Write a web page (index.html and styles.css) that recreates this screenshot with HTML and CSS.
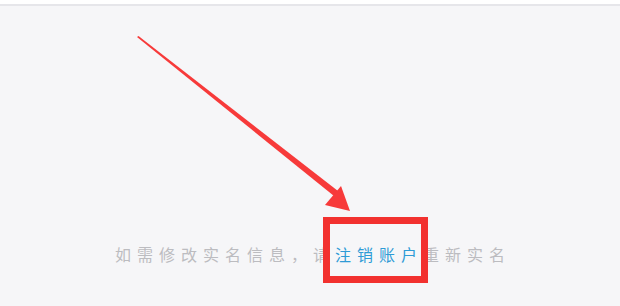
FILE: index.html
```html
<!DOCTYPE html>
<html lang="zh-CN">
<head>
<meta charset="utf-8">
<link rel="stylesheet" href="styles.css">
</head>
<body>
<div class="page">
  <div class="topline"></div>
  <main class="content">
    <p class="tip">如需修改实名信息，请<span class="link">注销账户</span>重新实名</p>
  </main>
  <svg class="annot" width="620" height="306" viewBox="0 0 620 306">
    <polygon points="137,37 138.5,36 338,191 334,196" fill="#f73a3a"/>
    <polygon points="341,186 350,211 325,205" fill="#f73a3a"/>
    <rect x="326.5" y="220.5" width="98" height="59" fill="none" stroke="#f2312f" stroke-width="7"/>
  </svg>
</div>
</body>
</html>
```
FILE: styles.css
```css
html, body {
  margin: 0;
  padding: 0;
  background: #f6f6f8;
}
.page {
  position: relative;
  width: 620px;
  height: 306px;
  overflow: hidden;
  background: #f6f6f8;
}
.topline {
  height: 4px;
  background: #ffffff;
  border-bottom: 2px solid #e6e6ea;
}
.content {
  display: flex;
  justify-content: center;
  padding-top: 236px;
}
.tip {
  margin: 0;
  padding-left: 6px;
  font-family: "Noto Sans CJK SC", sans-serif;
  font-weight: 400;
  font-size: 16px;
  line-height: 24px;
  letter-spacing: 6px;
  color: #bcbcc0;
  white-space: nowrap;
}
.link {
  color: #2f9bd6;
}
.annot {
  position: absolute;
  left: 0;
  top: 0;
}
```
